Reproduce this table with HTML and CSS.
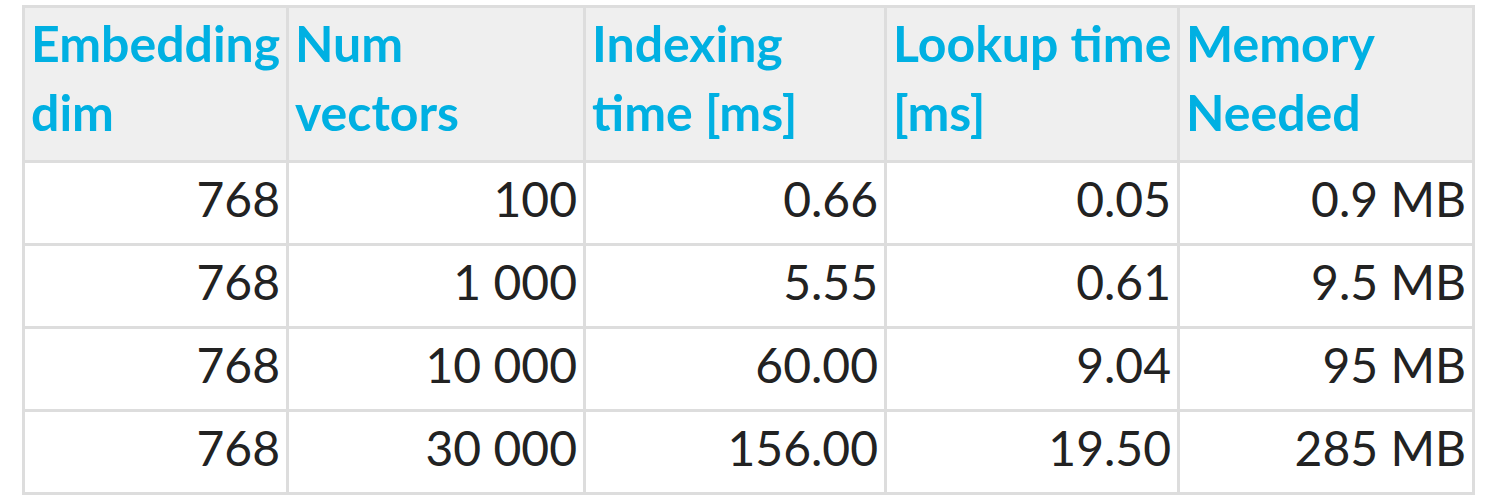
FILE: index.html
```html
<!DOCTYPE html>
<html lang="en">
<head>
<meta charset="utf-8">
<title>Vector index benchmark</title>
<link rel="stylesheet" href="styles.css">
</head>
<body>
<table class="bench">
  <colgroup>
    <col class="c1"><col class="c2"><col class="c3"><col class="c4"><col class="c5">
  </colgroup>
  <thead>
    <tr>
      <th>Embedding dim</th>
      <th>Num<br>vectors</th>
      <th>Indexing time [ms]</th>
      <th>Lookup time [ms]</th>
      <th>Memory Needed</th>
    </tr>
  </thead>
  <tbody>
    <tr><td>768</td><td>100</td><td>0.66</td><td>0.05</td><td>0.9 MB</td></tr>
    <tr><td>768</td><td>1 000</td><td>5.55</td><td>0.61</td><td>9.5 MB</td></tr>
    <tr><td>768</td><td>10 000</td><td>60.00</td><td>9.04</td><td>95 MB</td></tr>
    <tr><td>768</td><td>30 000</td><td>156.00</td><td>19.50</td><td>285 MB</td></tr>
  </tbody>
</table>
</body>
</html>
```
FILE: styles.css
```css
html, body {
  margin: 0;
  padding: 0;
  background: #ffffff;
}
body {
  padding: 5px 0 0 22px;
  font-family: "Lato", "Open Sans", sans-serif;
  font-size: 48px;
  color: #222222;
}
.bench {
  table-layout: fixed;
  border-collapse: separate;
  border-spacing: 0;
  border-left: 3px solid #dddddd;
  border-top: 3px solid #dddddd;
  width: 1453px;
}
.c1 { width: 264px; }
.c2 { width: 297px; }
.c3 { width: 301px; }
.c4 { width: 293px; }
.c5 { width: 295px; }
.bench th,
.bench td {
  border-right: 3px solid #dddddd;
  border-bottom: 3px solid #dddddd;
  line-height: 69px;
  box-sizing: border-box;
}
.bench th {
  background: #efefef;
  color: #00b0e2;
  font-size: 50px;
  font-weight: 700;
  text-align: left;
  vertical-align: top;
  padding: 1px 4px 13px 6px;
}
.bench td {
  text-align: right;
  font-weight: 400;
  padding: 1px 6px 10px 6px;
  white-space: nowrap;
}
```
